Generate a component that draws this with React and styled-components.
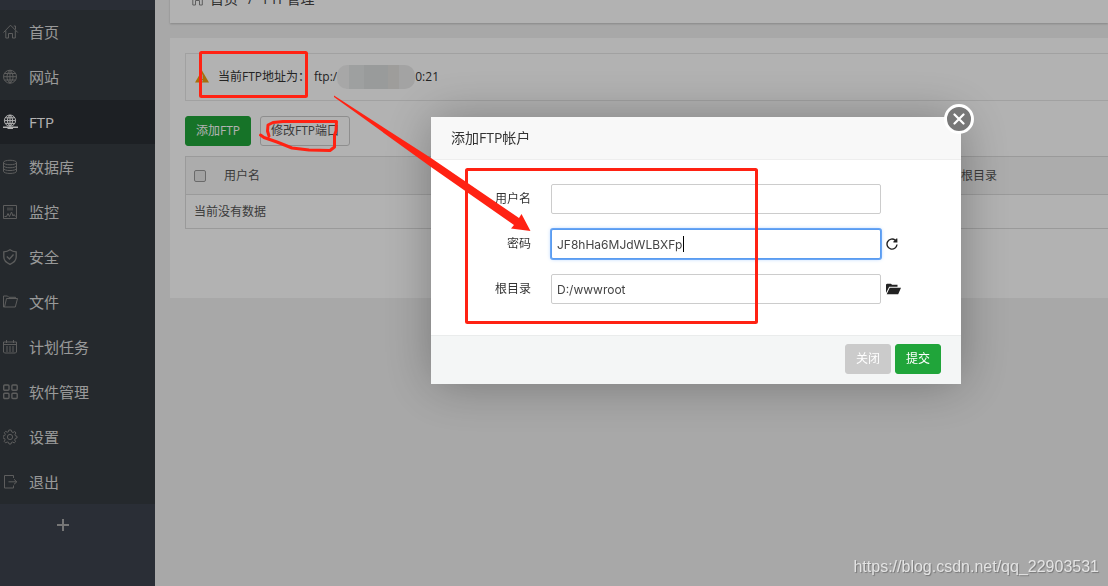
import React from "react";
import styled, { createGlobalStyle } from "styled-components";

const navItems = [
  { name: "首页", icon: "home" },
  { name: "网站", icon: "site" },
  { name: "FTP", icon: "ftp", active: true },
  { name: "数据库", icon: "database" },
  { name: "监控", icon: "monitor" },
  { name: "安全", icon: "shield" },
  { name: "文件", icon: "folder" },
  { name: "计划任务", icon: "calendar" },
  { name: "软件管理", icon: "apps" },
  { name: "设置", icon: "gear" },
  { name: "退出", icon: "exit" },
];

const icons = {
  home: (
    <path d="M0.5 8.5 7.5 1.2 14.8 8.5M2.8 6.5V14H5.5V9.5H9.5V14H12.3V6.5M10.8 2H12.5V5.5" />
  ),
  site: (
    <path d="M7 1.2a6.5 6.5 0 1 0 0 13 6.5 6.5 0 0 0 0-13ZM7 1.2V14.2M0.5 7.7H13.5M1.5 4.5H12.5M1.5 11H12.5M7 1.2C3 5 3 10.5 7 14.2M7 1.2C11 5 11 10.5 7 14.2" />
  ),
  ftp: (
    <>
      <path d="M7 1a5.6 5.6 0 1 0 0 11.2A5.6 5.6 0 0 0 7 1ZM7 1V12M1.4 6.6H12.6M2.4 3.8H11.6M2.4 9.4H11.6M7 1C3.6 4 3.6 9 7 12.2M7 1C10.4 4 10.4 9 7 12.2" />
      <path d="M0 13.2H15M4.5 14.2H10" strokeWidth="1.6" />
    </>
  ),
  database: (
    <path d="M0.5 3.5C0.5 0.5 13.5 0.5 13.5 3.5S0.5 6.5 0.5 3.5V12.2C0.5 15.2 13.5 15.2 13.5 12.2V3.5M0.5 6.5C0.5 9.5 13.5 9.5 13.5 6.5M0.5 9.3C0.5 12.3 13.5 12.3 13.5 9.3" />
  ),
  monitor: (
    <>
      <path d="M0.5 1.5H13.5V14.5H0.5ZM1.5 12.5H3.5L5 9.5 6.5 12.5 8.5 8 10 12 11 10.5 12.5 12.5" />
      <path d="M4 5H10" strokeWidth="3" opacity="0.5" />
    </>
  ),
  shield: (
    <path
      d="M7 0.8C5 2.3 3 2.8 0.8 2.8V8C0.8 11.5 3.5 13.8 7 15.3 10.5 13.8 13.2 11.5 13.2 8V2.8C11 2.8 9 2.3 7 0.8ZM3.8 7.5 6.5 10 10.5 5.5"
      strokeWidth="1.3"
    />
  ),
  folder: (
    <path d="M1.5 13H12.3L14.5 4.5H3.5L1.5 13H0.5V2H4.5L5.8 3.3H12.5V4.5" />
  ),
  calendar: (
    <path d="M0.5 3H13.5V13L12.5 14H1.5L0.5 13ZM0.5 5.5H13.5M3.5 1V4M10.5 1V4M3 8H5M6 8H8M9 8H11M3 10H5M6 10H8M9 10H11M3 12H5M6 12H8M9 12H11" />
  ),
  apps: (
    <g strokeWidth="1.4">
      <rect x="0.7" y="1" width="5.3" height="5.3" rx="1" />
      <rect x="8.9" y="1" width="5.3" height="5.3" rx="1" />
      <rect x="0.7" y="9.2" width="5.3" height="5.3" rx="1" />
      <rect x="8.9" y="9.2" width="5.3" height="5.3" rx="1" />
    </g>
  ),
  gear: (
    <g transform="translate(-1 0)">
      <path d="M6.8 1H9.2L9.7 2.9 11.1 3.5 12.8 2.5 13.9 4 13 5.5 13.4 6.8 15 7.3V9L13.3 9.5 12.7 11 13.6 12.6 12.2 13.9 10.7 13 9.5 13.4 9 15H7L6.5 13.4 5.2 13 3.6 13.8 2.2 12.4 3.1 10.9 2.7 9.6 1 9V7L2.7 6.6 3.3 5.2 2.3 3.7 3.7 2.3 5.2 3.2 6.4 2.8Z" />
      <circle cx="8" cy="8" r="2.6" />
    </g>
  ),
  exit: (
    <path d="M10.5 4V1.5H1.5V14H10.5V11.5M5.5 7.8H13.5M11 5.3 13.8 7.8 11 10.3" />
  ),
};

const Icon = ({ name }) => (
  <IconSvg viewBox="0 0 16 16" aria-hidden="true">
    {icons[name]}
  </IconSvg>
);

const Sidebar = () => (
  <SidebarContainer>
    <NavList>
      {navItems.map(({ name, icon, active }) => (
        <li key={name}>
          <NavLink href="#" $active={active}>
            <Icon name={icon} />
            {name}
          </NavLink>
        </li>
      ))}
    </NavList>
    <AddButton type="button" aria-label="添加">
      <svg width="14" height="14" viewBox="0 0 14 14">
        <path d="M7 1V13M1 7H13" stroke="currentColor" strokeWidth="2" />
      </svg>
    </AddButton>
  </SidebarContainer>
);

const FtpPage = () => (
  <Main>
    <Breadcrumb>
      <Icon name="home" />
      <a href="#">首页</a>
      <span>/</span>
      <span>FTP管理</span>
    </Breadcrumb>
    <Card>
      <AddressBar>
        <svg width="14" height="14" viewBox="0 0 14 14" aria-hidden="true">
          <path d="M7 0.5 14 12.5H0Z" fill="#f0a010" />
          <path d="M7 4.5V9M7 10V11.6" stroke="#ddd" strokeWidth="1.6" />
        </svg>
        <span>当前FTP地址为：</span>
        <Address>
          ftp:/
          <Mask />
          0:21
        </Address>
      </AddressBar>
      <Toolbar>
        <Button type="button" $variant="success">
          添加FTP
        </Button>
        <Button type="button">修改FTP端口</Button>
      </Toolbar>
      <Table>
        <thead>
          <tr>
            <CheckCell>
              <Checkbox type="checkbox" aria-label="全选" />
            </CheckCell>
            <th>用户名</th>
            <PathCell>根目录</PathCell>
          </tr>
        </thead>
        <tbody>
          <tr>
            <td colSpan="3">当前没有数据</td>
          </tr>
        </tbody>
      </Table>
    </Card>
  </Main>
);

const AddFtpDialog = () => (
  <Dialog role="dialog" aria-labelledby="dialog-title">
    <DialogTitle id="dialog-title">添加FTP帐户</DialogTitle>
    <CloseButton type="button" aria-label="关闭">
      <svg width="12" height="12" viewBox="0 0 12 12">
        <path
          d="M1.5 1.5 10.5 10.5M10.5 1.5 1.5 10.5"
          stroke="currentColor"
          strokeWidth="2.2"
          strokeLinecap="round"
        />
      </svg>
    </CloseButton>
    <Form id="ftp-form">
      <FormRow>
        <Label htmlFor="username">用户名</Label>
        <Field>
          <Input id="username" type="text" />
        </Field>
      </FormRow>
      <FormRow>
        <Label htmlFor="password">密码</Label>
        <Field>
          <Input
            id="password"
            type="text"
            defaultValue="JF8hHa6MJdWLBXFp"
            $focused
          />
          <Caret />
        </Field>
        <IconButton type="button" aria-label="随机密码">
          <svg width="12" height="12" viewBox="0 0 12 12">
            <path
              d="M11 6.5A5 5 0 1 1 9.3 2.3"
              fill="none"
              stroke="currentColor"
              strokeWidth="1.4"
            />
            <path
              d="M11.4 0.4V4.4H7.4V3.4L10.4 0.4Z"
              fill="currentColor"
            />
          </svg>
        </IconButton>
      </FormRow>
      <FormRow>
        <Label htmlFor="path">根目录</Label>
        <Field>
          <Input id="path" type="text" defaultValue="D:/wwwroot" />
        </Field>
        <IconButton type="button" aria-label="选择目录">
          <svg width="15" height="12" viewBox="0 0 15 12">
            <path
              d="M0 10V1.5L1 0.7H5L6 1.7H11.5V3.8H3.2L0 10ZM3.7 4.7H15L12.2 11.3H0.7Z"
              fill="currentColor"
            />
          </svg>
        </IconButton>
      </FormRow>
    </Form>
    <DialogFooter>
      <Button type="button" $variant="muted">
        关闭
      </Button>
      <Button type="submit" form="ftp-form" $variant="success">
        提交
      </Button>
    </DialogFooter>
  </Dialog>
);

const Markup = () => (
  <MarkupSvg width="780" height="340" viewBox="0 0 780 340" aria-hidden="true">
    <g fill="none" stroke="#ff2213" strokeWidth="3" strokeLinejoin="round">
      <rect x="200.5" y="52.5" width="106" height="44" rx="1" />
      <rect x="466.5" y="169.5" width="290" height="153" rx="1" />
      <path
        d="M269 136 267.5 131 268 125 273 122.500 283 121.5 336.5 121.5 336 131 334.5 135 334.5 147 330 150.5 309 150 292 148 277 142 264 137.5 260.5 135"
        strokeLinecap="round"
      />
    </g>
    <path
      d="M334 95.5 431 158 519 218 521.5 214 530.5 231 511 228.5 514 225 431 167 334 97Z"
      fill="#ff2213"
    />
  </MarkupSvg>
);

export default function App() {
  return (
    <>
      <GlobalStyle />
      <Layout>
        <Sidebar />
        <FtpPage />
      </Layout>
      <Overlay>
        <AddFtpDialog />
      </Overlay>
      <Markup />
      <Watermark>https://blog.csdn.net/qq_22903531</Watermark>
    </>
  );
}

const GlobalStyle = createGlobalStyle`
  * {
    box-sizing: border-box;
  }

  body {
    margin: 0;
    color: #555;
    background-color: #f1f1f1;
    font-family: "Open Sans", "Noto Sans CJK SC", sans-serif;
    font-size: 12px;
    line-height: 18px;
  }

  button,
  input {
    font: inherit;
  }
`;

const Layout = styled.div`
  display: flex;
  height: 100vh;
  overflow: hidden;
`;

const SidebarContainer = styled.aside`
  flex: none;
  width: 155px;
  padding-top: 10px;
  background-color: #3d434e;
`;

const NavList = styled.ul`
  margin: 0;
  padding: 0;
  list-style: none;
  background-color: #363c41;
`;

const IconSvg = styled.svg`
  flex: none;
  width: 16px;
  height: 16px;
  fill: none;
  stroke: #868686;
`;

const NavLink = styled.a`
  display: flex;
  align-items: center;
  gap: 10px;
  height: 44px;
  margin-bottom: 1px;
  padding-left: 3px;
  color: ${({ $active }) => ($active ? "#fff" : "#dcdcdc")};
  background-color: ${({ $active }) => ($active ? "#2a2e34" : "transparent")};
  font-size: 15px;
  text-decoration: none;

  ${IconSvg} {
    stroke: ${({ $active }) => ($active ? "#fff" : "#868686")};
  }
`;

const AddButton = styled.button`
  display: flex;
  align-items: center;
  justify-content: center;
  width: 125px;
  height: 40px;
  padding: 0;
  border: 0;
  color: #aaa;
  background: none;
`;

const Main = styled.main`
  flex: 1;
  min-width: 0;
  padding-left: 15px;
`;

const Breadcrumb = styled.nav`
  display: flex;
  align-items: center;
  gap: 4px;
  height: 48px;
  margin: -25px 0 15px;
  padding-left: 20px;
  color: #444;
  background-color: #fff;
  box-shadow: 0 1px 2px rgba(0, 0, 0, 0.2);
  font-size: 14px;

  a {
    margin-right: 6px;
    color: inherit;
    text-decoration: none;
  }

  span + span {
    margin-left: 6px;
  }
`;

const Card = styled.section`
  min-height: 260px;
  padding: 15px 0 0 15px;
  background-color: #fff;
`;

const AddressBar = styled.div`
  display: flex;
  align-items: center;
  height: 48px;
  padding-left: 9px;
  border: 1px solid #e7e7e7;
  border-right: 0;
  color: #333;

  span {
    margin-left: 9px;
  }
`;

const Address = styled.div`
  display: flex;
  align-items: center;
  margin-left: 4px;
`;

const Mask = styled.i`
  width: 78px;
  height: 24px;
  border-radius: 10px;
  background: linear-gradient(
    90deg,
    #f0f0f0 15%,
    #e3e5e5 15% 35%,
    #dcdede 35% 65%,
    #e2e1de 65% 80%,
    #eaeaea 80%
  );
`;

const Toolbar = styled.div`
  display: flex;
  gap: 9px;
  margin: 15px 0 10px;
`;

const buttonColors = {
  success: ["#20a53a", "#20a53a", "#fff"],
  muted: ["#cbcbcb", "#cbcbcb", "#fff"],
  default: ["#fff", "#ccc", "#555"],
};

const Button = styled.button`
  height: 30px;
  padding: 0 10px;
  border: 1px solid;
  border-radius: 3px;
  border-color: ${({ $variant = "default" }) => buttonColors[$variant][1]};
  color: ${({ $variant = "default" }) => buttonColors[$variant][2]};
  background-color: ${({ $variant = "default" }) => buttonColors[$variant][0]};
`;

const Table = styled.table`
  width: 100%;
  table-layout: fixed;
  border: 1px solid #ddd;
  border-right: 0;
  border-spacing: 0;

  th,
  td {
    padding: 7px 8px;
    font-weight: normal;
    text-align: left;
  }

  th {
    height: 38px;
    border-bottom: 1px solid #ddd;
    background-color: #f6f6f6;
  }

  td {
    height: 33px;
  }
`;

const Checkbox = styled.input`
  display: block;
  width: 12px;
  height: 12px;
  margin: 0;
  border: 1px solid #999;
  border-radius: 2px;
  appearance: none;
  background-color: #e8e8e8;
`;

const CheckCell = styled.th`
  width: 30px;
`;

const PathCell = styled.th`
  width: 155px;
`;

const Overlay = styled.div`
  position: fixed;
  inset: 0;
  display: flex;
  align-items: flex-start;
  justify-content: flex-end;
  padding: 117px 147px 0 0;
  background-color: rgba(0, 0, 0, 0.3);
`;

const Dialog = styled.div`
  position: relative;
  width: 530px;
  border-radius: 2px;
  color: #333;
  background-color: #fff;
  box-shadow: 1px 1px 50px rgba(0, 0, 0, 0.3);
`;

const DialogTitle = styled.h2`
  margin: 0;
  padding: 0 20px;
  border-bottom: 1px solid #eee;
  background-color: #f8f8f8;
  font-size: 14px;
  font-weight: normal;
  line-height: 42px;
`;

const CloseButton = styled.button`
  position: absolute;
  top: -13px;
  right: -13px;
  display: flex;
  align-items: center;
  justify-content: center;
  width: 30px;
  height: 30px;
  padding: 0;
  border: 3px solid #fff;
  border-radius: 50%;
  color: #fff;
  background-color: #787878;
`;

const Form = styled.form`
  display: flex;
  flex-direction: column;
  gap: 15px;
  padding: 24px 20px 31px 0;
`;

const FormRow = styled.div`
  display: flex;
  align-items: center;
`;

const Label = styled.label`
  width: 100px;
  margin-right: 20px;
  text-align: right;
`;

const Field = styled.div`
  position: relative;
  width: 330px;
`;

const Input = styled.input`
  display: block;
  width: 100%;
  height: 30px;
  padding: 0 5px;
  border: 1px solid ${({ $focused }) => ($focused ? "#5a9cf0" : "#ccc")};
  border-radius: 2px;
  outline: none;
  color: #444;
  font-family: Inter, "Noto Sans CJK SC", sans-serif;
  box-shadow: ${({ $focused }) =>
    $focused ? "0 0 0 1px #68a5f5, 0 0 4px #a5caff" : "none"};
`;

const Caret = styled.i`
  position: absolute;
  top: 7px;
  left: 132px;
  width: 1px;
  height: 16px;
  background-color: #000;
`;

const IconButton = styled.button`
  display: flex;
  margin-left: 5px;
  padding: 0;
  border: 0;
  color: #222;
  background: none;
`;

const DialogFooter = styled.footer`
  display: flex;
  justify-content: flex-end;
  gap: 4px;
  padding: 8px 20px 10px;
  border-top: 1px solid #eaecec;
  background-color: #f4f6f6;
`;

const MarkupSvg = styled.svg`
  position: absolute;
  top: 0;
  left: 0;
  pointer-events: none;
`;

const Watermark = styled.div`
  position: fixed;
  right: 9px;
  bottom: 10px;
  color: #e3e3e3;
  font-family: "Liberation Sans", sans-serif;
  font-size: 16px;
  text-shadow: 1px 1px 1px rgba(0, 0, 0, 0.3);
`;
